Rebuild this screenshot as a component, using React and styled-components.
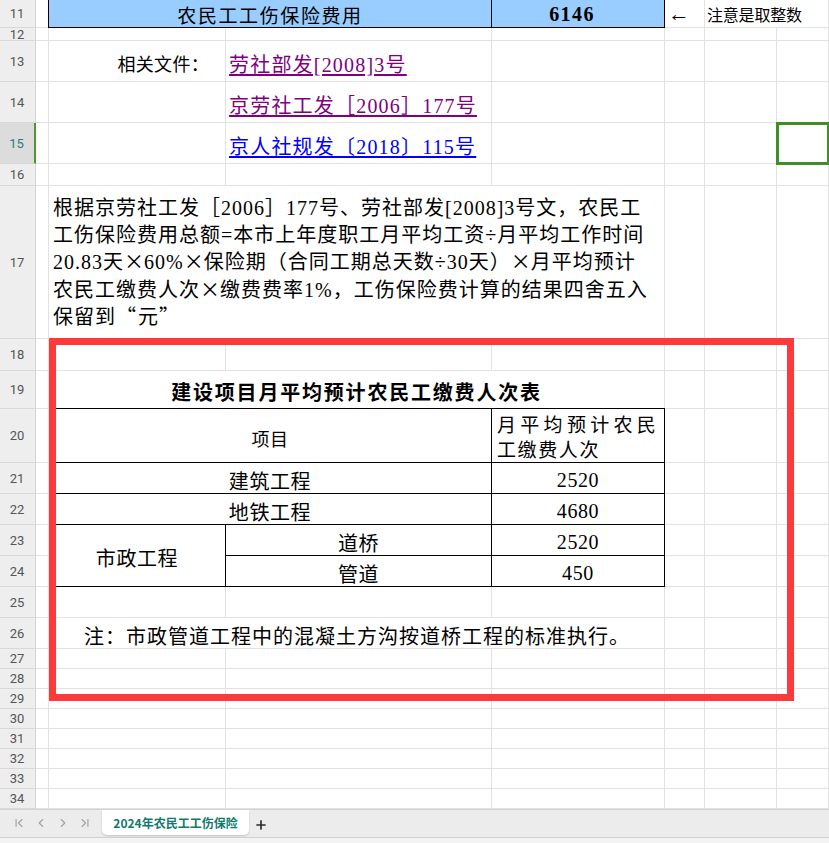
import styled, { createGlobalStyle } from 'styled-components';
import { ChevronFirst, ChevronLeft, ChevronRight, ChevronLast, Plus } from 'lucide-react';

const GlobalStyle = createGlobalStyle`
    html, body {
        margin: 0;
        padding: 0;
        background: #ffffff;
        overflow: hidden;
    }
    * {
        box-sizing: border-box;
    }
`;

const SERIF = `"Liberation Serif", "Noto Sans CJK SC", serif`;
const SANS = `"Noto Sans CJK SC", "Noto Sans", sans-serif`;

// 열 너비 (머리 열 포함), 마지막 G열은 남는 폭
const COLS = ['A', 'B', 'C', 'D', 'E', 'F', 'G'];
const COL_TEMPLATE = '36px 13px 177px 266px 173px 40px 72px 1fr';

const ROWS = [
    { n: 11, h: 28 }, { n: 12, h: 13 }, { n: 13, h: 41 }, { n: 14, h: 41 },
    { n: 15, h: 41, active: true }, { n: 16, h: 22 }, { n: 17, h: 153 },
    { n: 18, h: 32 }, { n: 19, h: 38 }, { n: 20, h: 54 }, { n: 21, h: 31 },
    { n: 22, h: 31 }, { n: 23, h: 31 }, { n: 24, h: 31 }, { n: 25, h: 31 },
    { n: 26, h: 31 }, { n: 27, h: 20 }, { n: 28, h: 20 }, { n: 29, h: 20 },
    { n: 30, h: 20 }, { n: 31, h: 20 }, { n: 32, h: 20 }, { n: 33, h: 20 },
    { n: 34, h: 20 },
];

// 칸 내용 (styled 컴포넌트가 아래에 있어서 함수로 만듦)
const getCells = () => ({
    B11: { cs: 2, boxed: true, bl: true, fill: '#99ccff', justify: 'center',
        body: <SheetTitleText>农民工工伤保险费用</SheetTitleText> },
    D11: { boxed: true, fill: '#99ccff', justify: 'center', body: <Amount>6146</Amount> },
    E11: { justify: 'flex-start', body: <Arrow>←</Arrow> },
    F11: { cs: 2, justify: 'flex-start', body: <Hint>注意是取整数</Hint> },
    B13: { justify: 'flex-end', body: <Label>相关文件：</Label> },
    C13: { justify: 'flex-start', body: <DocLink $visited>劳社部发[2008]3号</DocLink> },
    C14: { justify: 'flex-start', body: <DocLink $visited>京劳社工发［2006］177号</DocLink> },
    C15: { justify: 'flex-start', body: <DocLink>京人社规发〔2018〕115号</DocLink> },
    G15: { selected: true },
    B17: { cs: 3, justify: 'flex-start', body: (
        <Paragraph>
            根据京劳社工发［2006］177号、劳社部发[2008]3号文，农民工<br />
            工伤保险费用总额=本市上年度职工月平均工资÷月平均工作时间<br />
            20.83天<Wide>×</Wide>60%<Wide>×</Wide>保险期（合同工期总天数÷30天）<Wide>×</Wide>月平均预计<br />
            农民工缴费人次<Wide>×</Wide>缴费费率1%，工伤保险费计算的结果四舍五入<br />
            保留到<Quote>“</Quote>元<Quote>”</Quote>
        </Paragraph>
    ) },
    B19: { cs: 3, justify: 'center', body: <TableTitle>建设项目月平均预计农民工缴费人次表</TableTitle> },
    B20: { cs: 2, boxed: true, bt: true, justify: 'center', body: <Text $size={18}>项目</Text> },
    D20: { boxed: true, bt: true, justify: 'flex-start', body: (
        <HeadLines>
            <HeadLine $spacing={4.3}>月平均预计农民</HeadLine>
            <HeadLine $spacing={1.6}>工缴费人次</HeadLine>
        </HeadLines>
    ) },
    B21: { cs: 2, boxed: true, justify: 'center', body: <Text>建筑工程</Text> },
    D21: { boxed: true, justify: 'center', body: <Text>2520</Text> },
    B22: { cs: 2, boxed: true, justify: 'center', body: <Text>地铁工程</Text> },
    D22: { boxed: true, justify: 'center', body: <Text>4680</Text> },
    B23: { rs: 2, boxed: true, justify: 'center', body: <Text>市政工程</Text> },
    C23: { boxed: true, justify: 'center', body: <Text>道桥</Text> },
    D23: { boxed: true, justify: 'center', body: <Text>2520</Text> },
    C24: { boxed: true, justify: 'center', body: <Text>管道</Text> },
    D24: { boxed: true, justify: 'center', body: <Text>450</Text> },
    B26: { cs: 3, justify: 'flex-start', body: <Note>注：市政管道工程中的混凝土方沟按道桥工程的标准执行。</Note> },
});

// 병합된 칸에 덮이는 칸 목록
const buildCovered = (cells) => {
    const covered = new Set();
    Object.entries(cells).forEach(([key, cell]) => {
        const c = COLS.indexOf(key[0]);
        const r = ROWS.findIndex((row) => row.n === Number(key.slice(1)));
        for (let dr = 0; dr < (cell.rs || 1); dr++) {
            for (let dc = 0; dc < (cell.cs || 1); dc++) {
                if (dr || dc) covered.add(`${COLS[c + dc]}${ROWS[r + dr].n}`);
            }
        }
    });
    return covered;
};

const App = () => {
    const cells = getCells();
    const covered = buildCovered(cells);

    return (
        <>
            <GlobalStyle />
            <Window>
                <Sheet $rows={ROWS.map((row) => `${row.h}px`).join(' ')}>
                    {ROWS.map((row, ri) => (
                        <RowHeader key={`h${row.n}`} $row={ri + 1} $active={row.active}>
                            {row.n}
                        </RowHeader>
                    ))}
                    {ROWS.map((row, ri) =>
                        COLS.map((col, ci) => {
                            const key = `${col}${row.n}`;
                            if (covered.has(key)) return null;
                            const cell = cells[key] || {};
                            return (
                                <Cell
                                    key={key}
                                    $row={ri + 1}
                                    $col={ci + 2}
                                    $rs={cell.rs || 1}
                                    $cs={cell.cs || 1}
                                    $boxed={cell.boxed}
                                    $bt={cell.bt}
                                    $bl={cell.bl}
                                    $fill={cell.fill}
                                    $justify={cell.justify}
                                    $selected={cell.selected}
                                >
                                    {cell.body}
                                </Cell>
                            );
                        })
                    )}
                    <Highlight />
                </Sheet>
                <TabBar>
                    <NavGroup>
                        <NavButton><ChevronFirst size={14} strokeWidth={2} /></NavButton>
                        <NavButton><ChevronLeft size={14} strokeWidth={2} /></NavButton>
                        <NavButton><ChevronRight size={14} strokeWidth={2} /></NavButton>
                        <NavButton><ChevronLast size={14} strokeWidth={2} /></NavButton>
                    </NavGroup>
                    <SheetTab>2024年农民工工伤保险</SheetTab>
                    <AddButton><Plus size={14} strokeWidth={2.8} /></AddButton>
                </TabBar>
                <StatusStrip />
            </Window>
        </>
    );
};

export default App;

const Window = styled.div`
    width: 829px;
    height: 843px;
    display: flex;
    flex-direction: column;
    background: #ffffff;
`;

const Sheet = styled.div`
    position: relative;
    display: grid;
    grid-template-columns: ${COL_TEMPLATE};
    grid-template-rows: ${(props) => props.$rows};
    height: 809px;
    flex-shrink: 0;
    overflow: hidden;
`;

const RowHeader = styled.div`
    grid-column: 1;
    grid-row: ${(props) => props.$row};
    display: flex;
    align-items: center;
    justify-content: center;
    padding-right: 1px;
    background: ${(props) => (props.$active ? '#dcdcdc' : '#eeeeee')};
    border-bottom: 1px solid #d8d8d8;
    border-right: ${(props) => (props.$active ? '2px solid #4a9a2c' : '1px solid #d4d4d4')};
    font-family: Roboto, "Noto Sans", sans-serif;
    font-size: 13px;
    color: ${(props) => (props.$active ? '#1f7f7c' : '#555555')};
`;

const Cell = styled.div`
    position: relative;
    grid-column: ${(props) => props.$col} / span ${(props) => props.$cs};
    grid-row: ${(props) => props.$row} / span ${(props) => props.$rs};
    display: flex;
    align-items: center;
    justify-content: ${(props) => props.$justify || 'flex-start'};
    min-width: 0;
    white-space: nowrap;
    background: ${(props) => props.$fill || '#ffffff'};
    border-right: 1px solid ${(props) => (props.$boxed ? '#000000' : '#e2e2e2')};
    border-bottom: 1px solid ${(props) => (props.$boxed ? '#000000' : '#e2e2e2')};
    box-shadow: ${(props) =>
        props.$bt && props.$bl ? '-1px -1px 0 #000000'
            : props.$bt ? '0 -1px 0 #000000'
            : props.$bl ? '-1px 0 0 #000000'
            : 'none'};
    color: #000000;
    font-family: ${SERIF};
    z-index: ${(props) => (props.$selected ? 2 : 'auto')};
    outline: ${(props) => (props.$selected ? '3px solid #3f8f24' : 'none')};
    outline-offset: -2px;
`;

const SheetTitleText = styled.span`
    font-size: 19px;
    letter-spacing: 1.6px;
    padding-top: 2px;
`;

const Amount = styled.span`
    font-size: 20px;
    font-weight: 700;
    letter-spacing: 1.4px;
    padding-top: 2px;
    margin-right: 12px;
`;

const Arrow = styled.span`
    font-size: 22px;
    line-height: 24px;
    padding-left: 3px;
`;

const Hint = styled.span`
    font-family: ${SANS};
    font-size: 16px;
    letter-spacing: -0.2px;
    padding-left: 2px;
    padding-top: 1px;
`;

const Label = styled.span`
    font-size: 18px;
    letter-spacing: 0.3px;
    padding-right: 16px;
    padding-top: 4px;
`;

const DocLink = styled.a`
    font-size: 20px;
    letter-spacing: 1.2px;
    padding-left: 3px;
    padding-top: 4px;
    color: ${(props) => (props.$visited ? '#800080' : '#0000ff')};
    text-decoration: underline;
    text-underline-offset: 2px;
    cursor: pointer;
`;

const Paragraph = styled.p`
    margin: 0;
    padding: 2px 0 0 4px;
    font-size: 20px;
    line-height: 26.5px;
    letter-spacing: 1px;
`;

// 전각 기호 (×)
const Wide = styled.span`
    font-family: ${SANS};
    letter-spacing: 0;
`;

const Quote = styled.span`
    font-family: ${SANS};
    letter-spacing: 2px;
`;

const TableTitle = styled.span`
    font-size: 20px;
    font-weight: 700;
    letter-spacing: 1.8px;
    padding-top: 3px;
`;

const Text = styled.span`
    font-size: ${(props) => props.$size || 20}px;
    letter-spacing: 0.6px;
    padding-top: 4px;
`;

const HeadLines = styled.div`
    display: flex;
    flex-direction: column;
    padding: 4px 0 0 5px;
`;

const HeadLine = styled.span`
    font-size: 19px;
    line-height: 25px;
    letter-spacing: ${(props) => props.$spacing}px;
`;

const Note = styled.span`
    font-size: 20px;
    letter-spacing: 1px;
    padding-left: 35px;
    padding-top: 4px;
`;

const Highlight = styled.div`
    position: absolute;
    left: 49px;
    top: 338px;
    width: 745px;
    height: 363px;
    border: 7px solid #fc3a3a;
    pointer-events: none;
    z-index: 3;
`;

const TabBar = styled.div`
    display: flex;
    align-items: flex-start;
    height: 28px;
    flex-shrink: 0;
    background: #ececec;
    border-top: 1px solid #d4d4d4;
`;

const NavGroup = styled.div`
    display: flex;
    gap: 8px;
    padding-left: 12px;
    padding-top: 6px;
`;

const NavButton = styled.span`
    display: flex;
    width: 14px;
    height: 14px;
    color: #a3a3a3;
`;

const SheetTab = styled.div`
    margin-left: 10px;
    width: 147px;
    height: 25px;
    display: flex;
    align-items: center;
    justify-content: center;
    background: #ffffff;
    border-radius: 0 0 5px 5px;
    box-shadow: 0 1px 2px rgba(0, 0, 0, 0.18);
    font-family: ${SANS};
    font-size: 12px;
    font-weight: 700;
    color: #0f7a6d;
`;

const AddButton = styled.span`
    display: flex;
    margin-left: 5px;
    margin-top: 8px;
    width: 14px;
    height: 14px;
    color: #2a2a2a;
`;

const StatusStrip = styled.div`
    height: 6px;
    flex-shrink: 0;
    background: #f3f3f3;
    border-top: 1px solid #cfcfcf;
`;
